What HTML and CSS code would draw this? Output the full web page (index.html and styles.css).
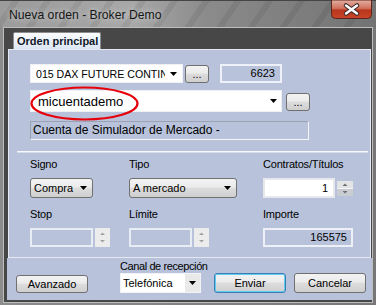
FILE: index.html
```html
<!DOCTYPE html>
<html lang="es">
<head>
  <meta charset="UTF-8">
  <meta name="viewport" content="width=device-width, initial-scale=1">
  <title>Nueva orden - Broker Demo</title>
  <link rel="stylesheet" href="styles.css">
</head>
<body>

  <div class="ventana">
    <div class="barra-titulo">
      <span class="titulo">Nueva orden - Broker Demo</span>
      <div class="cerrar">
        <svg width="41" height="19" viewBox="0 0 41 19">
          <defs>
            <linearGradient id="rojo" x1="0" y1="0" x2="0" y2="1">
              <stop offset="0" stop-color="#e3b0a3"/>
              <stop offset="0.45" stop-color="#d0715c"/>
              <stop offset="0.55" stop-color="#b8361c"/>
              <stop offset="1" stop-color="#c9452a"/>
            </linearGradient>
          </defs>
          <path d="M0.5 0 H40.5 V14.5 Q40.5 18.5 36.5 18.5 H4.5 Q0.5 18.5 0.5 14.5 Z" fill="url(#rojo)" stroke="#5b2418"/>
          <path d="M15 5.5 L26 13.5 M26 5.5 L15 13.5" stroke="#3a2a2a" stroke-width="4.5" stroke-linecap="round"/>
          <path d="M15 5.5 L26 13.5 M26 5.5 L15 13.5" stroke="#ffffff" stroke-width="2.4" stroke-linecap="round"/>
        </svg>
      </div>
    </div>

    <div class="cliente">
      <div class="pestanas">
        <div class="pestana">Orden principal</div>
      </div>

      <div class="pagina">
        <div class="arriba">
          <div class="fila">
            <div class="combo combo-instr">
              <span class="valor">015 DAX FUTURE CONTINUO</span>
              <svg class="flecha" width="7" height="4"><path d="M0 0h7L3.5 4z"/></svg>
            </div>
            <button class="puntos">...</button>
            <div class="campo campo-num">6623</div>
          </div>
          <div class="fila fila-cuenta">
            <div class="combo combo-cuenta">
              <span class="valor">micuentademo</span>
              <svg class="flecha" width="7" height="4"><path d="M0 0h7L3.5 4z"/></svg>
            </div>
            <button class="puntos puntos-cuenta">...</button>
          </div>
          <div class="fila fila-desc">
            <div class="campo-desc">Cuenta de Simulador de Mercado -</div>
          </div>
        </div>

        <div class="separador"></div>

        <div class="rejilla">
          <div class="grupo">
            <label>Signo</label>
            <div class="desplegable d-signo">
              <span>Compra</span>
              <svg class="flecha" width="7" height="4"><path d="M0 0h7L3.5 4z"/></svg>
            </div>
          </div>
          <div class="grupo">
            <label>Tipo</label>
            <div class="desplegable d-tipo">
              <span>A mercado</span>
              <svg class="flecha" width="7" height="4"><path d="M0 0h7L3.5 4z"/></svg>
            </div>
          </div>
          <div class="grupo">
            <label>Contratos/Títulos</label>
            <div class="spin">
              <div class="caja caja-blanca">1</div>
              <svg class="flechas-on" width="16" height="15">
                <rect x="0" y="0" width="16" height="7" fill="#e3e4e6"/>
                <rect x="0" y="8" width="16" height="7" fill="#c9cdd2"/>
                <rect x="0" y="7" width="16" height="1" fill="#f4f4f4"/>
                <path d="M5.5 5h5L8 2.5z" fill="#6f6f6f"/>
                <path d="M5.5 10h5L8 12.5z" fill="#6f6f6f"/>
              </svg>
            </div>
          </div>
          <div class="grupo">
            <label>Stop</label>
            <div class="spin">
              <div class="caja caja-off"></div>
              <svg class="flechas-off" width="15" height="19">
                <rect x="0" y="0" width="15" height="19" fill="#ececec"/>
                <path d="M5 7h5L7.5 4.5z" fill="#a2a2a2"/>
                <path d="M5 12h5L7.5 14.5z" fill="#a2a2a2"/>
              </svg>
            </div>
          </div>
          <div class="grupo">
            <label>Límite</label>
            <div class="spin">
              <div class="caja caja-off"></div>
              <svg class="flechas-off" width="15" height="19">
                <rect x="0" y="0" width="15" height="19" fill="#ececec"/>
                <path d="M5 7h5L7.5 4.5z" fill="#a2a2a2"/>
                <path d="M5 12h5L7.5 14.5z" fill="#a2a2a2"/>
              </svg>
            </div>
          </div>
          <div class="grupo">
            <label>Importe</label>
            <div class="campo campo-importe">165575</div>
          </div>
        </div>
      </div>

      <div class="pie">
        <button class="boton b-avanzado">Avanzado</button>
        <div class="canal">
          <div class="etiqueta">Canal de recepción</div>
          <div class="combo combo-canal">
            <span class="valor">Telefónica</span>
            <span class="btn-flecha"><svg class="flecha" width="7" height="4"><path d="M0 0h7L3.5 4z"/></svg></span>
          </div>
        </div>
        <button class="boton b-enviar">Enviar</button>
        <button class="boton b-cancelar">Cancelar</button>
      </div>
    </div>

    <svg class="marca" width="112" height="40" viewBox="0 0 112 40">
      <ellipse cx="55.5" cy="19.5" rx="53" ry="16" fill="none" stroke="#e6000a" stroke-width="2.2"/>
    </svg>
  </div>

</body>
</html>
```

FILE: styles.css
```css
body {
  margin: 0;
  background: #6f6f6f;
  font-family: "Liberation Sans", Arial, sans-serif;
  font-size: 11px;
  color: #000;
}
.ventana {
  position: relative;
  width: 376px;
  height: 305px;
  overflow: hidden;
  background: linear-gradient(to right, #8c8c8c, #777);
}
.barra-titulo {
  display: flex;
  justify-content: space-between;
  align-items: flex-start;
  height: 26px;
  border-top: 1px solid #454545;
  background:
    repeating-linear-gradient(125deg, rgba(0,0,0,0) 0 10px, rgba(0,0,0,.07) 10px 16px, rgba(0,0,0,0) 16px 26px),
    linear-gradient(to right, #9b9b9b 0, #a8a8a8 35%, #8b8b8b 55%, #737373 100%);
}
.titulo {
  padding: 7px 0 0 9px;
  font-size: 12.2px;
  line-height: 15px;
  color: #161616;
  text-shadow: 0 0 6px rgba(255,255,255,.7);
}
.cerrar {
  width: 41px;
  height: 19px;
  margin: -1px 4px 0 0;
}
.cerrar svg {
  display: block;
}

.cliente {
  margin: 0 3px;
  height: 274px;
  border: 1px solid #bdbdbd;
  background: #474747;
}
.pestanas {
  display: flex;
  align-items: flex-end;
  height: 21px;
  padding-left: 9px;
}
.pestana {
  height: 16px;
  padding: 0 2px 0 3px;
  border: 1px solid #8d8d8d;
  border-bottom: none;
  border-radius: 2px 2px 0 0;
  background: linear-gradient(#fbfcfe, #dce6f4);
  font-weight: bold;
  line-height: 17px;
  color: #10182a;
}

.pagina {
  box-sizing: border-box;
  width: 363px;
  height: 209px;
  margin-left: 4px;
  border: 1px solid #e4e9f2;
  background: #b8c3db;
}
.arriba {
  padding: 14px 0 0 21px;
}
.fila {
  display: flex;
  align-items: flex-start;
}
.fila-cuenta {
  margin-top: 7px;
}
.fila-desc {
  margin-top: 9px;
}

.combo {
  box-sizing: border-box;
  display: flex;
  align-items: center;
  justify-content: space-between;
  background: #fff;
  border: 1px solid #eef0f3;
}
.combo .valor {
  overflow: hidden;
  white-space: nowrap;
}
.flecha {
  display: block;
  flex: none;
}
.combo-instr {
  width: 153px;
  height: 19px;
  padding: 0 5px 0 5px;
  font-size: 10.6px;
}
.combo-instr .valor {
  width: 129px;
}
.combo-cuenta {
  width: 252px;
  height: 22px;
  padding: 0 4px 0 7px;
  font-size: 13px;
}

.puntos {
  box-sizing: border-box;
  width: 24px;
  height: 18px;
  margin: 1px 0 0 2px;
  padding: 0;
  border: 1px solid #707070;
  border-radius: 3px;
  background: linear-gradient(#f3f3f3, #ebebeb 45%, #dcdcdc 50%, #cfcfcf);
  font-family: inherit;
  font-size: 11px;
  line-height: 14px;
  color: #000;
}
.puntos-cuenta {
  margin: 3px 0 0 4px;
}

.campo {
  box-sizing: border-box;
  height: 19px;
  border: 2px solid #edf0f6;
  text-align: right;
  line-height: 15px;
}
.campo-num {
  width: 62px;
  margin-left: 11px;
  padding-right: 5px;
}
.campo-desc {
  box-sizing: border-box;
  width: 279px;
  height: 19px;
  padding-left: 2px;
  border: 1px solid;
  border-color: #9aa2b3 #f3f5f9 #f3f5f9 #9aa2b3;
  font-size: 12px;
  line-height: 17px;
  white-space: nowrap;
}

.separador {
  height: 1px;
  margin: 11px 2px 0 8px;
  background: #f8f9fc;
  border-bottom: 1px solid #d6dcea;
}

.rejilla {
  display: grid;
  grid-template-columns: 99px 134px 91px;
  row-gap: 10px;
  padding: 5px 0 0 21px;
}
.grupo label {
  display: block;
  height: 13px;
  margin-bottom: 7px;
  line-height: 13px;
  letter-spacing: -0.2px;
  white-space: nowrap;
}
.desplegable {
  box-sizing: border-box;
  display: flex;
  align-items: center;
  justify-content: space-between;
  height: 20px;
  padding: 0 5px 0 3px;
  border: 1px solid #707070;
  border-radius: 3px;
  background: linear-gradient(#f3f3f3, #ebebeb 45%, #dddddd 50%, #cfcfcf);
}
.d-signo {
  width: 63px;
}
.d-tipo {
  width: 108px;
}

.spin {
  display: flex;
  align-items: flex-start;
}
.caja {
  box-sizing: border-box;
  height: 19px;
  border: 2px solid #e8ecf3;
  text-align: right;
  line-height: 15px;
}
.caja-blanca {
  width: 72px;
  height: 20px;
  padding-right: 5px;
  background: #fff;
  border-color: #e6e8eb;
  line-height: 16px;
}
.caja-off {
  width: 63px;
}
.flechas-on {
  display: block;
  margin: 3px 0 0 2px;
}
.flechas-off {
  display: block;
  margin-left: 2px;
}
.campo-importe {
  width: 90px;
  padding-right: 4px;
}

.pie {
  box-sizing: border-box;
  display: flex;
  align-items: flex-end;
  width: 365px;
  height: 42px;
  margin-left: 3px;
  padding: 0 0 7px 9px;
  background: #b8c3db;
}
.boton {
  box-sizing: border-box;
  width: 72px;
  height: 20px;
  padding: 0;
  border: 1px solid #707070;
  border-radius: 3px;
  background: linear-gradient(#f3f3f3, #ebebeb 45%, #dddddd 50%, #cfcfcf);
  font-family: inherit;
  font-size: 11px;
  color: #000;
}
.b-avanzado {
  height: 18px;
}
.b-enviar {
  margin-left: 13px;
  border-color: #3c7fb1;
  box-shadow: inset 0 0 0 1px #5fcaf4;
}
.b-cancelar {
  margin-left: 8px;
}
.canal {
  width: 81px;
  margin-left: 32px;
}
.etiqueta {
  line-height: 13px;
  letter-spacing: -0.4px;
  white-space: nowrap;
}
.combo-canal {
  height: 20px;
  padding-left: 2px;
  border-color: #f2f3f5;
}
.btn-flecha {
  display: flex;
  align-items: center;
  justify-content: center;
  width: 15px;
  height: 18px;
  background: #e9e9e9;
}

.marca {
  position: absolute;
  left: 29px;
  top: 84px;
}
```
